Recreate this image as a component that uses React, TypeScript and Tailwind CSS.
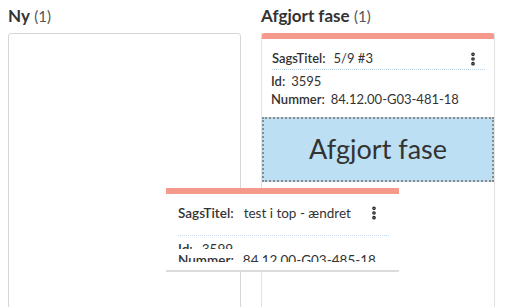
import { MoreVertical } from "lucide-react";

// a single case card in a phase column
function CaseCard({ title, id, nummer }: { title: string; id: string; nummer: string }) {
  return (
    <div className="bg-white">
      <div className="h-[6px] bg-[#f5998a] rounded-t-[2px]" />
      <div className="px-[9px] pt-[9px] pb-[5px] text-[13px] text-[#333]">
        <div className="flex items-center justify-between h-[22px] ml-[1px] border-b border-dotted border-[#b9d3ea]">
          <div className="flex gap-[8px]">
            <span className="font-semibold">SagsTitel:</span>
            <span>{title}</span>
          </div>
          <MoreVertical size={16} strokeWidth={3.5} className="text-[#222] mr-[4px]" />
        </div>
        <div className="h-[18px] leading-[18px] mt-[2px] flex gap-[6px]">
          <span className="font-semibold">Id:</span>
          <span>{id}</span>
        </div>
        <div className="h-[18px] leading-[18px] flex gap-[6px]">
          <span className="font-semibold">Nummer:</span>
          <span>{nummer}</span>
        </div>
      </div>
    </div>
  );
}

export default function App() {
  return (
    <div
      className="relative h-[307px] w-[506px] overflow-hidden bg-white px-[8px] pt-[5px]"
      style={{ fontFamily: "Lato, 'Open Sans', sans-serif" }}
    >
      <div className="flex gap-[20px] h-full">
        {/* Ny column */}
        <div className="w-[233px] flex flex-col">
          <h2 className="text-[17px] leading-[22px] text-[#333] h-[28px]">
            <span className="font-bold">Ny</span> <span className="text-[15px] text-[#555]">(1)</span>
          </h2>
          <div className="flex-1 border border-[#d6d6d6] rounded-[3px] -mb-[4px]" />
        </div>

        {/* Afgjort fase column */}
        <div className="w-[234px] flex flex-col">
          <h2 className="text-[17px] leading-[22px] text-[#333] h-[28px]">
            <span className="font-bold">Afgjort fase</span> <span className="text-[15px] text-[#555]">(1)</span>
          </h2>
          <div className="flex-1 border-x border-[#e2e2e2] -mb-[4px]">
            <CaseCard title="5/9 #3" id="3595" nummer="84.12.00-G03-481-18" />
            <div className="mt-[4px] h-[65px] bg-[#bcdff3] border-2 border-dotted border-[#8a8a8a] flex items-center justify-center">
              <span className="text-[27px] text-[#333]">Afgjort fase</span>
            </div>
          </div>
        </div>
      </div>

      {/* card being dragged */}
      <div className="absolute left-[166px] top-[188px] w-[233px] h-[84px] overflow-hidden bg-white border-b-2 border-[#dcdcdc]">
        <div className="h-[6px] bg-[#f5998a]" />
        <div className="pl-[12px] pr-[10px] pt-[5px] text-[13.5px] text-[#333]">
          <div className="flex items-center justify-between h-[28px] border-b border-dotted border-[#c5dbef] pb-[8px] box-content">
            <div className="flex gap-[10px]">
              <span className="font-semibold">SagsTitel:</span>
              <span>test i top - ændret</span>
            </div>
            <MoreVertical size={16} strokeWidth={3.5} className="text-[#222] mr-[7px]" />
          </div>
          <div className="h-[9px] overflow-hidden leading-[18px] mt-[4px] flex gap-[9px]">
            <span className="font-semibold">Id:</span>
            <span>3599</span>
          </div>
          <div className="h-[13px] overflow-hidden leading-[22px] flex gap-[9px]">
            <span className="font-semibold">Nummer:</span>
            <span>84.12.00-G03-485-18</span>
          </div>
        </div>
      </div>
    </div>
  );
}
